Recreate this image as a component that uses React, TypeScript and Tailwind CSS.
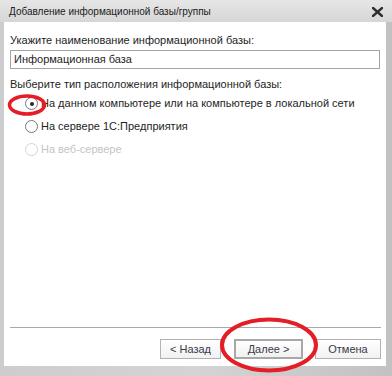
export default function App() {
  return (
    <div className="relative w-[392px] h-[376px] overflow-hidden bg-[#cfcfcf] flex flex-col font-['Liberation_Sans',Arial,sans-serif] text-[#1e1e1e]">
      {/* title bar */}
      <div className="h-[22px] shrink-0 flex items-center justify-between pl-[9px] pr-[9px] bg-gradient-to-b from-[#e6e6e6] to-[#d6d6d6]">
        <span className="text-[10px] text-[#1a1a1a] leading-none mt-[1px]">Добавление информационной базы/группы</span>
        <svg width="11" height="10" viewBox="0 0 11 10" className="mt-[2px]">
          <path d="M1 1 L10 9 M10 1 L1 9" stroke="#2e2e2e" strokeWidth="2.4" strokeLinecap="square" />
        </svg>
      </div>

      {/* body */}
      <div className="flex-1 flex pl-[4px] pr-[6px] pb-[10px] bg-gradient-to-r from-[#cdcdcd] via-[#d4d4d4] to-[#c2c2c2]">
        <div className="flex-1 flex flex-col bg-white px-[6px] pt-[10px] pb-[7px]">
          <div className="text-[11px] leading-[16px]">Укажите наименование информационной базы:</div>
          <div className="mt-[2px] h-[19px] border border-[#a5a5a5] flex items-center px-[3px] text-[11px] leading-none">
            Информационная база
          </div>

          <div className="mt-[7px] text-[11px] leading-[16px]">Выберите тип расположения информационной базы:</div>
          <div className="flex flex-col pl-[15px]">
            <Radio label="На данном компьютере или на компьютере в локальной сети" checked />
            <Radio label="На сервере 1С:Предприятия" />
            <Radio label="На веб-сервере" disabled />
          </div>

          <div className="flex-1" />
          <div className="h-px bg-[#a9a9a9] mr-[-1px]" />
          <div className="mt-[11px] flex justify-end items-center mr-[-1px]">
            <Btn label="< Назад" w="w-[61px]" />
            <Btn label="Далее >" w="w-[69px] ml-[13px]" def />
            <Btn label="Отмена" w="w-[66px] ml-[12px]" />
          </div>
        </div>
      </div>

      {/* red annotation ellipses */}
      <svg className="absolute left-0 top-0 pointer-events-none" width="392" height="376" viewBox="0 0 392 376">
        <ellipse cx="27" cy="105" rx="17.5" ry="9" fill="none" stroke="#e51d26" strokeWidth="3.5" />
        <ellipse cx="269" cy="345" rx="47" ry="25.5" fill="none" stroke="#e51d26" strokeWidth="4" />
      </svg>
    </div>
  );
}

function Radio({ label, checked, disabled }: { label: string; checked?: boolean; disabled?: boolean }) {
  return (
    <div className="h-[23px] flex items-center whitespace-nowrap">
      <span
        className={
          "shrink-0 w-[13px] h-[13px] rounded-full border flex items-center justify-center bg-white " +
          (disabled ? "border-[#d4d4d4]" : "border-[#7a7a7a]")
        }
      >
        {checked && <span className="w-[4px] h-[4px] rounded-full bg-[#2a2a2a]" />}
      </span>
      <span className={"ml-[3px] text-[11px] leading-none " + (disabled ? "text-[#c4c4c4]" : "text-[#1e1e1e]")}>{label}</span>
    </div>
  );
}

function Btn({ label, w, def }: { label: string; w: string; def?: boolean }) {
  return (
    <div
      className={
        w +
        " h-[20px] flex items-center justify-center text-[11px] leading-none text-[#3a3a4a] bg-gradient-to-b from-white to-[#f1f1f1] " +
        (def ? "border-2 border-[#a8a8a8]" : "border border-[#b2b2b2]")
      }
    >
      {label}
    </div>
  );
}
